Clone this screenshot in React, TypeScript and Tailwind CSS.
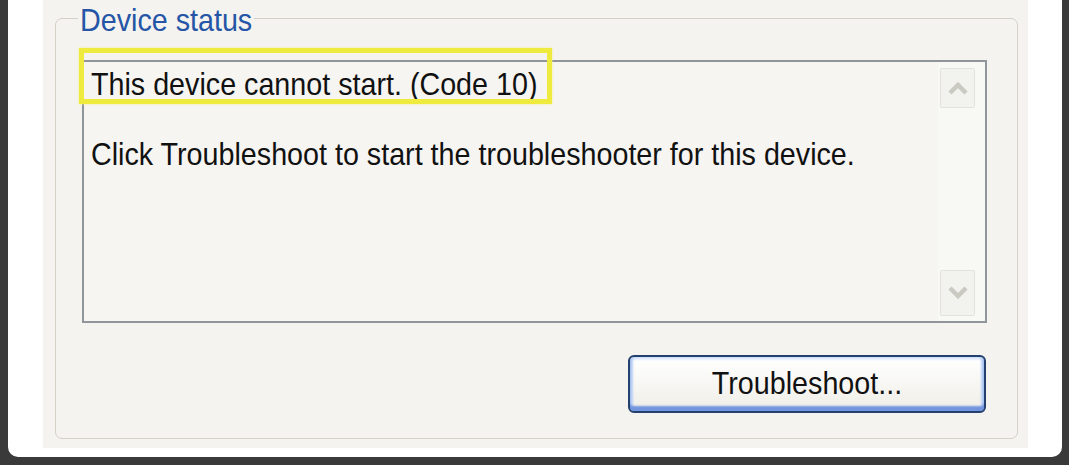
import React from 'react';

const Chevron = ({ up }: { up?: boolean }) => (
    <svg width="20" height="14" viewBox="0 0 20 14" className="block">
        <polyline
            points={up ? '2,12 10,4 18,12' : '2,2 10,10 18,2'}
            fill="none"
            stroke="#cacac3"
            strokeWidth="4.5"
        />
    </svg>
);

const ScrollBox = ({ up }: { up?: boolean }) => (
    <div className={`${up ? 'h-[40px]' : 'h-[46px]'} w-[35px] flex items-center justify-center border border-[#e3e2dc] bg-[#f2f2ee] rounded-[2px]`}>
        <Chevron up={up} />
    </div>
);

const Line = ({ children }: { children: React.ReactNode }) => (
    <p className="origin-[0_27px] scale-y-110 whitespace-pre">{children}</p>
);

const App: React.FC = () => {
    return (
        <div className="w-[1069px] h-[465px] bg-[#3a3a3a] pl-[8px] pr-[7px] pb-[8px] font-['Liberation_Sans',Arial,sans-serif] overflow-hidden">
            <div className="h-full bg-white rounded-b-[10px] pl-[35px] pr-[34px] pb-[9px]">
                <div className="h-full bg-[#f4f3ef] pl-[12px] pr-[10px] pb-[9px]">
                    <fieldset className="w-[963px] h-[439px] border border-[#d3d1c6] rounded-[7px]">
                        <legend className="ml-[22px] px-[2px] pt-[6px] text-[28.7px] leading-[30px] text-[#2555a6]">
                            <span className="inline-block origin-[0_80%] scale-y-110">Device status</span>
                        </legend>

                        <div className="relative ml-[26px] mt-[24px] w-[905px] h-[263px] border-2 border-[#8f959b] bg-[#f6f5f1] flex">
                            <div className="flex-1 pl-[7px] pt-[6px] text-[28.7px] leading-[35px] text-[#111]">
                                <Line>This device cannot start. (Code 10)</Line>
                                <Line> </Line>
                                <Line>Click Troubleshoot to start the troubleshooter for this device.</Line>
                            </div>
                            <div className="w-[47px] pl-[2px] pr-[8px] pt-[6px] pb-[5px] flex flex-col justify-between bg-[#f8f8f5]">
                                <ScrollBox up />
                                <ScrollBox />
                            </div>
                            {/* highlight annotation */}
                            <div className="absolute left-[-5px] top-[-14px] w-[473px] h-[56px] border-[5px] border-[#eeea3e] shadow-[0_0_2px_#f3f08a]" />
                        </div>

                        <div className="flex justify-end mt-[32px] mr-[31px]">
                            <button className="w-[358px] h-[58px] rounded-[6px] border-2 border-[#23406f] bg-gradient-to-b from-white to-[#efeee7] text-[28.7px] text-[#111] shadow-[inset_0_-5px_2px_#7395e0,inset_3px_0_2px_#bcd2f5,inset_-3px_0_2px_#bcd2f5,inset_0_3px_2px_#e4eefc]">
                                <span className="inline-block scale-y-110">Troubleshoot...</span>
                            </button>
                        </div>
                    </fieldset>
                </div>
            </div>
        </div>
    );
};

export default App;
